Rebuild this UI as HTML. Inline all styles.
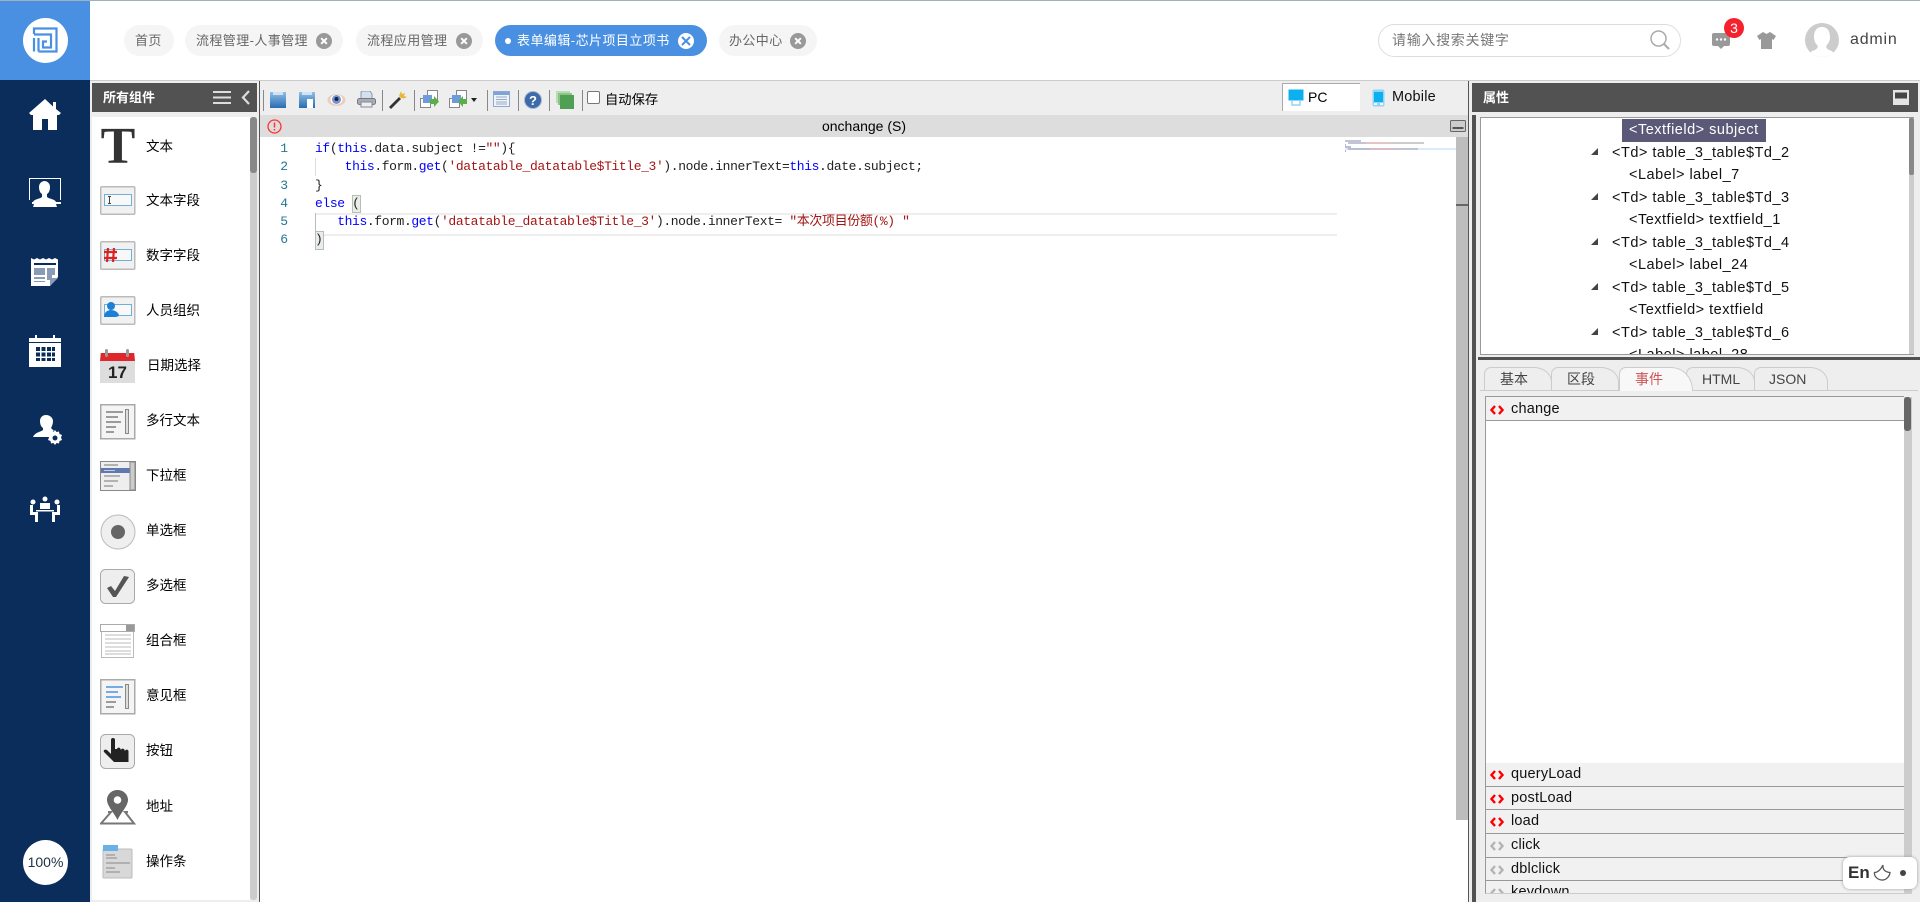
<!DOCTYPE html>
<html lang="zh"><head><meta charset="utf-8"><title>表单编辑</title>
<style>
*{box-sizing:border-box}
html,body{margin:0;padding:0;width:1920px;height:902px;overflow:hidden;background:#eee;font-family:"Liberation Sans","Noto Sans CJK SC",sans-serif;color:#000}
.a{position:absolute}
svg{position:absolute;display:block}
.tab{position:absolute;top:25px;height:31px;border-radius:16px;background:#f5f5f5;color:#666;font-size:13px;letter-spacing:.4px;line-height:31px;padding-left:11px;white-space:nowrap}
.x{position:absolute;top:7.5px;width:16px;height:16px;border-radius:50%;background:#999}
.x:before,.x:after{content:"";position:absolute;left:4px;top:7px;width:8px;height:2px;background:#fff;transform:rotate(45deg)}
.x:after{transform:rotate(-45deg)}
.lab{position:absolute;left:146px;font-size:13.5px;line-height:18px;height:18px;white-space:nowrap}
.sep{position:absolute;top:90px;width:1px;height:21px;background:#888}
.c{position:absolute;left:315px;font:13px/18px "Liberation Mono","Noto Sans CJK SC",monospace;letter-spacing:-.39px;white-space:pre;color:#222;height:18px}
.k{color:#00f}.s{color:#a31515}
.ln{position:absolute;left:260px;width:28px;text-align:right;font:13px/18px "Liberation Mono",monospace;color:#237893;height:18px}
.t{position:absolute;font-size:14.5px;letter-spacing:.5px;line-height:20px;height:20px;white-space:nowrap;color:#111}
.tri{position:absolute;left:1591px;width:0;height:0;border-left:7px solid transparent;border-bottom:7px solid #444}
.ev{position:absolute;left:1485px;width:419px;background:#f1f1f1;border-bottom:1px solid #999;border-left:1px solid #999;font-size:14.5px;letter-spacing:.2px;color:#111;padding-left:25px}
.tb{position:absolute;top:367px;height:23px;border:1px solid #ccc;border-bottom:0;border-top-right-radius:18px 15px;border-top-left-radius:7px;font-size:14px;line-height:23px;color:#444;background:#eee}
</style></head><body>

<!-- top -->
<div class="a" style="left:0;top:0;width:1920px;height:80px;background:#fff"></div>
<div class="a" style="left:0;top:0;width:1920px;height:1px;background:#9fb2b8"></div>
<div class="a" style="left:0;top:80px;width:1920px;height:1px;background:#ccc"></div>
<div class="a" style="left:0;top:1px;width:90px;height:79px;background:#4a90e2"></div>
<div class="a" style="left:23px;top:18px;width:45px;height:45px;border-radius:50%;background:#fff"></div>
<svg style="left:32px;top:27px" width="26" height="26" viewBox="0 0 26 26" fill="none" stroke="#4a90e2" stroke-width="2.200"><path d="M2 7V1.500h22.500v23H6.500"/><path d="M2 7.500h17v13h-8v-6h4"/><path d="M2 11v13.500M6.500 11v13.500"/></svg>

<div class="tab" style="left:124px;width:50px">首页</div>
<div class="tab" style="left:185px;width:158px">流程管理-人事管理<span class="x" style="left:131px"></span></div>
<div class="tab" style="left:356px;width:127px">流程应用管理<span class="x" style="left:100px"></span></div>
<div class="tab" style="left:495px;width:212px;background:#4a90e2;color:#fff;padding-left:22px;letter-spacing:.45px"><span class="a" style="left:10px;top:13px;width:6px;height:6px;border-radius:50%;background:#fff"></span>表单编辑-芯片项目立项书</div>
<div class="a" style="left:678px;top:32.5px;width:16px;height:16px;border-radius:50%;background:#fff"></div>
<svg style="left:681px;top:35.5px" width="10" height="10" viewBox="0 0 10 10" stroke="#4a90e2" stroke-width="2"><path d="M1 1l8 8M9 1L1 9"/></svg>
<div class="tab" style="left:719px;width:98px;padding-left:10px">办公中心<span class="x" style="left:71px"></span></div>

<div class="a" style="left:1378px;top:24px;width:303px;height:33px;border:1px solid #ddd;border-radius:17px;background:#fff;font-size:14px;line-height:31px;color:#777;padding-left:13px;letter-spacing:.7px">请输入搜索关键字</div>
<svg style="left:1649px;top:29px" width="22" height="22" viewBox="0 0 22 22" fill="none" stroke="#aaa" stroke-width="1.500"><circle cx="9.500" cy="9.500" r="7.500"/><path d="M15 15l5 5" stroke-width="2"/></svg>
<svg style="left:1711px;top:32px" width="20" height="18" viewBox="0 0 20 18"><path d="M3 1h14a2 2 0 0 1 2 2v9a2 2 0 0 1-2 2h-4l-3 3-3-3H3a2 2 0 0 1-2-2V3a2 2 0 0 1 2-2z" fill="#999"/><circle cx="6" cy="7.500" r="1.200" fill="#fff"/><circle cx="10" cy="7.500" r="1.200" fill="#fff"/><circle cx="14" cy="7.500" r="1.200" fill="#fff"/></svg>
<div class="a" style="left:1724px;top:18px;width:20px;height:20px;border-radius:50%;background:#f5222d;color:#fff;font-size:14px;line-height:20px;text-align:center">3</div>
<svg style="left:1757px;top:32px" width="19" height="17" viewBox="0 0 19 17"><path d="M6 0l3.500 2L13 0l6 4-2.500 4-1.500-1v10H4V7L2.500 8 0 4z" fill="#999"/></svg>
<div class="a" style="left:1805px;top:23px;width:34px;height:34px;border-radius:50%;background:#ccc;overflow:hidden"><svg style="left:0;top:0" width="34" height="34" viewBox="0 0 34 34"><path d="M17 4c-6 0-8 5-8 10 0 3 1 6 3.500 8.500 1 2-1 4-4 5-3 1-4 3-4 6.500h25c0-3.500-1-5.500-4-6.500-3-1-5-3-4-5 2.500-2.500 3.500-5.500 3.500-8.500 0-5-2-10-8-10z" fill="#fff"/></svg></div>
<div class="a" style="left:1850px;top:30px;font-size:16px;line-height:20px;color:#444;letter-spacing:.8px">admin</div>

<!-- sidebar -->
<div class="a" style="left:0;top:80px;width:90px;height:822px;background:#0b2d5b"></div>
<svg style="left:28px;top:98px" width="34" height="34" viewBox="0 0 34 34" fill="#fff"><path d="M17 1L1 15l2 2h2v15h9V21h6v11h9V17h2l2-2-5-4V4h-3v4.500z"/></svg>
<svg style="left:29px;top:178px" width="32" height="30" viewBox="0 0 32 30" fill="#fff"><path d="M0 0h32v22h-1V1H1v21H0z"/><path d="M16 3c-4 0-6 3-6 6 0 3 1 6 3 7v3c-2 2-8 2-9 5h-1v2h2l-1 3h24l-1-3h6v-2h-6c-1-3-7-3-9-5v-3c2-1 3-4 3-7 0-3-2-6-6-6z"/></svg>
<svg style="left:30px;top:257px" width="30" height="30" viewBox="0 0 30 30"><path d="M1 1l3 1.500L7 1l3 1.500L13 1l3 1.500L19 1l3 1.500L25 1l3 1.500V20l-8 9H1z" fill="#fff"/><path d="M20 29v-8h8z" fill="#8a9bb5"/><path d="M4 6h22v2H4z" fill="#0b2d5b"/><path d="M4 11h11v7H4z" fill="#8a9bb5"/><path d="M17 11h8v7h-3v5h-5z" fill="#8a9bb5"/><path d="M4 20h11v2H4zM4 24h11v1H4z" fill="#8a9bb5"/></svg>
<svg style="left:29px;top:334px" width="32" height="33" viewBox="0 0 32 33" fill="#fff"><path d="M0 4h6V1h2v3h16V1h2v3h6v29H0zM2 10v21h28V10z"/><path d="M2 10h28v21H2z"/><g fill="#0b2d5b"><path d="M7 13h4v4H7zM12.500 13h4v4h-4zM18 13h4v4h-4zM23 13h3v4h-3zM7 18.500h4v4H7zM12.500 18.500h4v4h-4zM18 18.500h4v4h-4zM23 18.500h3v4h-3zM7 24h4v3H7zM12.500 24h4v3h-4zM18 24h4v3h-4zM23 24h3v3h-3z"/><path d="M0 8h32v1H0z"/></g></svg>
<svg style="left:32px;top:415px" width="31" height="30" viewBox="0 0 31 30"><path d="M14 0c-4 0-6 3-6 6 0 3 1 6 3 7v2c-2 2-8 2-10 7h16c1-3 3-5 5-6-1-1-2-2-3-3 1-2 2-4 2-7 0-3-3-6-7-6z" fill="#fff"/><path d="M23 15l1.500 2 2.500-.5.500 2.500 2.500 1-1 2.500 1 2.500-2.500 1-.5 2.500-2.500-.5-1.500 2-1.500-2-2.500.5-.5-2.500-2.500-1 1-2.500-1-2.500 2.500-1 .5-2.500 2.500.5z" fill="#fff"/><circle cx="23" cy="23" r="2.500" fill="#0b2d5b"/></svg>
<svg style="left:28px;top:496px" width="34" height="26" viewBox="0 0 34 26" fill="#fff"><circle cx="5" cy="6" r="2.500"/><circle cx="17" cy="3" r="2.500"/><circle cx="29" cy="6" r="2.500"/><path d="M12 7h10v6H12zM2 9h3v7h5v10H7v-7H2zM32 9h-3v7h-5v10h3v-7h5z"/><path d="M8 14h18v1.500H8z"/></svg>
<div class="a" style="left:23px;top:840px;width:45px;height:45px;border-radius:50%;background:#fff;color:#234;font-size:14px;line-height:45px;text-align:center">100%</div>

<!-- left panel -->
<div class="a" style="left:92px;top:83px;width:165px;height:29px;background:#525252;color:#fff;font-size:13px;font-weight:bold;line-height:29px;padding-left:11px">所有组件</div>
<svg style="left:213px;top:90px" width="40" height="15" viewBox="0 0 40 15" fill="none" stroke="#ddd" stroke-width="2"><path d="M0 2h18M0 7.500h18M0 13h18"/><path d="M36 1l-6 6.500 6 6.500" stroke-width="2.200"/></svg>
<div class="a" style="left:92px;top:117px;width:158px;height:783px;background:#fff"></div>
<div class="a" style="left:250px;top:117px;width:7px;height:783px;background:#ccc;border-radius:3px"></div>
<div class="a" style="left:250px;top:117px;width:7px;height:56px;background:#888;border-radius:3px"></div>
<div class="a" style="left:259px;top:81px;width:1px;height:821px;background:#555"></div>

<!-- components -->
<div class="a" style="left:98px;top:120px;width:40px;height:54px;font:bold 52px/54px 'Liberation Serif',serif;color:#333;text-align:center">T</div>
<div class="lab" style="top:138px">文本</div>

<svg style="left:100px;top:186px" width="36" height="30" viewBox="0 0 36 30"><rect x=".75" y=".75" width="34" height="27.500" rx="1" fill="#f1f1f1" stroke="#bbb" stroke-width="1.500"/><rect x="4.500" y="8.500" width="27" height="11" fill="#f8f8f8" stroke="#6eb0d8"/><path d="M8 10.500h3M9.500 10.500v7M8 17.500h3" stroke="#444" fill="none"/></svg>
<div class="lab" style="top:192px">文本字段</div>

<svg style="left:100px;top:241px" width="36" height="30" viewBox="0 0 36 30"><rect x=".75" y=".75" width="34" height="27.500" rx="1" fill="#f1f1f1" stroke="#bbb" stroke-width="1.500"/><rect x="4.500" y="8.500" width="27" height="11" fill="#f8f8f8" stroke="#6eb0d8"/><path d="M8 7l-1 14M14 7l-1 14M4 11h13M4 17h13" stroke="#d22" stroke-width="2.200" fill="none"/></svg>
<div class="lab" style="top:247px">数字字段</div>

<svg style="left:100px;top:296px" width="36" height="30" viewBox="0 0 36 30"><rect x=".75" y=".75" width="34" height="27.500" rx="1" fill="#f1f1f1" stroke="#bbb" stroke-width="1.500"/><rect x="4.500" y="8.500" width="27" height="11" fill="#f8f8f8" stroke="#6eb0d8"/><circle cx="11" cy="10" r="4" fill="#1c80d8"/><path d="M4 21c0-5 4-7 7-7s8 2 8 6l-3 1z" fill="#1c80d8"/></svg>
<div class="lab" style="top:302px">人员组织</div>

<svg style="left:100px;top:349px" width="36" height="36" viewBox="0 0 36 36"><path d="M0 4h35v30H0z" fill="#ddd"/><path d="M1 4h33l1 8H0z" fill="#e0262a"/><rect x="5" y="0" width="3" height="8" rx="1.500" fill="#999"/><rect x="26" y="0" width="3" height="8" rx="1.500" fill="#999"/><text x="17.500" y="29" text-anchor="middle" font-family="Liberation Sans" font-weight="bold" font-size="17" fill="#222">17</text></svg>
<div class="lab" style="top:357px;left:147px">日期选择</div>

<svg style="left:100px;top:404px" width="36" height="36" viewBox="0 0 36 36"><rect x=".75" y=".75" width="34" height="34" fill="#f4f4f4" stroke="#aaa" stroke-width="1.500"/><path d="M6 8h17M6 13h12M6 18h15M6 23h10M6 28h8" stroke="#666" stroke-width="1.200"/><rect x="25.500" y="5.500" width="3" height="24" fill="#ddd" stroke="#888"/></svg>
<div class="lab" style="top:412px">多行文本</div>

<svg style="left:100px;top:461px" width="36" height="32" viewBox="0 0 36 32"><rect x=".5" y=".5" width="35" height="29" fill="#eee" stroke="#888"/><path d="M1 1h28v7H1z" fill="#eee"/><path d="M1 7h29v5H1z" fill="#6078b0"/><path d="M4 9.500h11" stroke="#ccd" /><path d="M4 4h14M4 15h16M4 20h14M4 25h9" stroke="#777"/><rect x="30" y="1" width="5" height="28" fill="#ccc" stroke="#888"/></svg>
<div class="lab" style="top:467px">下拉框</div>

<svg style="left:100px;top:514px" width="36" height="36" viewBox="0 0 36 36"><circle cx="18" cy="18" r="17" fill="#efefef" stroke="#bbb"/><circle cx="18" cy="18" r="7" fill="#666"/></svg>
<div class="lab" style="top:522px">单选框</div>

<svg style="left:100px;top:569px" width="36" height="36" viewBox="0 0 36 36"><rect x=".5" y=".5" width="34" height="34" rx="5" fill="#eee" stroke="#aaa"/><path d="M7 19l4-2 4 5 9-15 5 1-13 20h-3z" fill="#555"/></svg>
<div class="lab" style="top:577px">多选框</div>

<svg style="left:100px;top:624px" width="36" height="36" viewBox="0 0 36 36"><rect x="1.500" y="1.500" width="32" height="32" fill="#fff" stroke="#bbb"/><rect x=".5" y=".5" width="34" height="7" fill="#fff" stroke="#aaa"/><rect x="26" y="1" width="8" height="6" fill="#999"/><path d="M5 11h26M5 15h26M5 19h26M5 23h26M5 27h26M5 30h26" stroke="#bbb"/></svg>
<div class="lab" style="top:632px">组合框</div>

<svg style="left:100px;top:679px" width="36" height="36" viewBox="0 0 36 36"><rect x=".75" y=".75" width="34" height="34" fill="#f4f4f4" stroke="#aaa" stroke-width="1.500"/><path d="M6 8h17M6 13h12M6 18h15" stroke="#2b7fe0" stroke-width="1.200"/><path d="M6 23h10M6 28h8" stroke="#666" stroke-width="1.200"/><rect x="25.500" y="5.500" width="3" height="24" fill="#ddd" stroke="#888"/></svg>
<div class="lab" style="top:687px">意见框</div>

<svg style="left:100px;top:734px" width="36" height="36" viewBox="0 0 36 36"><rect x=".5" y=".5" width="34" height="34" rx="5" fill="#eee" stroke="#aaa"/><path d="M11 6a2 2 0 0 1 4 0v9l2 0a1.800 1.800 0 0 1 3.500 0l.5 1a1.800 1.800 0 0 1 3.500 0l.5 1a1.800 1.800 0 0 1 3.500 0V28H14L4 18c-1-2 1-3 3-2l4 4z" fill="#222"/></svg>
<div class="lab" style="top:742px">按钮</div>

<svg style="left:100px;top:790px" width="36" height="36" viewBox="0 0 36 36"><path d="M17.500 0C11 0 7 5 7 10c0 6 8 14 10.500 20C20 24 28 16 28 10 28 5 24 0 17.500 0z" fill="#666"/><circle cx="17.500" cy="10" r="3.800" fill="#fff"/><path d="M8 22h3L1 33.500h33L25 22h3" fill="none" stroke="#777" stroke-width="2"/></svg>
<div class="lab" style="top:798px">地址</div>

<svg style="left:102px;top:844px" width="32" height="36" viewBox="0 0 32 36"><rect x="1" y="5" width="29" height="29" rx="1" fill="#d8d8d8" stroke="#bbb"/><rect x="1" y="1" width="15" height="6" fill="#69b2e8"/><path d="M4 11h9M4 14h11M4 19h24M4 24h9M4 28h14" stroke="#888"/></svg>
<div class="lab" style="top:853px">操作条</div>

<!-- toolbar -->
<div class="sep" style="left:263px"></div><div class="sep" style="left:382px"></div><div class="sep" style="left:414px"></div><div class="sep" style="left:487px"></div><div class="sep" style="left:518px"></div><div class="sep" style="left:549px"></div><div class="sep" style="left:582px"></div>
<svg style="left:270px;top:92px" width="17" height="17" viewBox="0 0 17 17"><defs><linearGradient id="b1" x1="0" y1="0" x2="0" y2="1"><stop offset="0" stop-color="#8fc0e8"/><stop offset="1" stop-color="#2a6cb0"/></linearGradient></defs><rect width="16" height="16" fill="url(#b1)"/><rect x="3" y="0" width="10" height="3" fill="#cfe3f4"/></svg>
<svg style="left:299px;top:92px" width="17" height="17" viewBox="0 0 17 17"><rect width="16" height="16" fill="url(#b1)"/><rect x="3" y="0" width="10" height="3" fill="#cfe3f4"/><path d="M8 7h6v9H8z" fill="#fff"/></svg>
<svg style="left:327px;top:93px" width="19" height="14" viewBox="0 0 19 14"><ellipse cx="9.500" cy="7" rx="9" ry="6" fill="#eecdb8"/><ellipse cx="9.500" cy="6.500" rx="6" ry="5" fill="#fff"/><circle cx="9.500" cy="6.500" r="4.500" fill="#6f96d8"/><circle cx="9.500" cy="6" r="2" fill="#223"/></svg>
<svg style="left:357px;top:91px" width="19" height="17" viewBox="0 0 19 17"><path d="M5 0h8l2 3v5H4V1z" fill="#d4e0ee" stroke="#8898b0"/><rect x="0.500" y="7.500" width="18" height="6" rx="2" fill="#aab" stroke="#777"/><rect x="4" y="11" width="11" height="5" fill="#eee" stroke="#889"/></svg>
<svg style="left:388px;top:90px" width="19" height="19" viewBox="0 0 19 19"><path d="M1 17l10-10 2 2L3 19z" fill="#333"/><path d="M13 1l1 3 3-1-1 3 3 1-3 1.500L13 8l-2-2z" fill="#e8b838"/></svg>
<svg style="left:420px;top:90px" width="19" height="19" viewBox="0 0 19 19"><rect x="7.500" y=".5" width="10" height="11" fill="#fff" stroke="#888"/><rect x=".5" y="8.500" width="10" height="9" fill="#fff" stroke="#888"/><rect x="3" y="5" width="9" height="8" fill="#6d9bdc"/><path d="M10 9h4V6l5 5.500L14 17v-3h-4z" fill="#5cae4a"/></svg>
<svg style="left:449px;top:90px" width="19" height="19" viewBox="0 0 19 19"><rect x="7.500" y=".5" width="10" height="11" fill="#fff" stroke="#888"/><rect x=".5" y="8.500" width="10" height="9" fill="#fff" stroke="#888"/><rect x="3" y="5" width="9" height="8" fill="#6d9bdc"/><path d="M18 9h-4V6L9 11.500 14 17v-3h4z" fill="#5cae4a"/></svg>
<svg style="left:471px;top:98px" width="6" height="4" viewBox="0 0 6 4"><path d="M0 0h6L3 4z" fill="#222"/></svg>
<svg style="left:493px;top:91px" width="17" height="16" viewBox="0 0 17 16"><rect x=".5" y=".5" width="16" height="15" fill="#eef4fb" stroke="#8ea8d0"/><path d="M1 1h15v3H1z" fill="#7ea3d8"/><path d="M3 6h11M3 8.500h11M3 11h11M3 13h11" stroke="#9ab"/></svg>
<svg style="left:524px;top:91px" width="18" height="18" viewBox="0 0 18 18"><circle cx="9" cy="9" r="8.500" fill="#3d6aa8" stroke="#aab8cc"/><text x="9" y="14" text-anchor="middle" font-family="Liberation Sans" font-weight="bold" font-size="13" fill="#fff">?</text></svg>
<svg style="left:556px;top:91px" width="18" height="18" viewBox="0 0 18 18"><rect x="0" y="0" width="14" height="12" fill="#b8dcb4"/><rect x="2" y="2" width="14" height="12" fill="#8cc488"/><rect x="4" y="4" width="14" height="14" fill="#4f9f54"/></svg>
<div class="a" style="left:587px;top:91px;width:13px;height:13px;border:1px solid #777;border-radius:2px;background:#fff"></div>
<div class="a" style="left:605px;top:91px;font-size:13.3px;line-height:18px">自动保存</div>

<div class="a" style="left:1282px;top:83px;width:78px;height:28px;background:#fff;border:1px solid #aaa;border-right:0;border-bottom:0;font-size:14px;line-height:26px;padding-left:25px">PC</div>
<svg style="left:1288px;top:89px" width="16" height="17" viewBox="0 0 16 17"><rect x=".5" y=".5" width="15" height="11" rx="1" fill="#0ab0f0" stroke="#8fd6f5"/><path d="M4 12v4h8v-4" fill="none" stroke="#8fd6f5" stroke-width="1.500"/></svg>
<svg style="left:1372px;top:89px" width="13" height="18" viewBox="0 0 13 18"><rect x=".5" y=".5" width="12" height="17" rx="2" fill="#8fd6f5"/><rect x="2" y="3" width="9" height="10" fill="#0ab0f0"/><rect x="2" y="14" width="3" height="2" fill="#fff"/><rect x="8" y="14" width="3" height="2" fill="#fff"/></svg>
<div class="a" style="left:1425px;top:88px;font-size:14px;line-height:18px;color:#111;left:1425px;display:none"></div>
<div class="a" style="left:1392px;top:88px;font-size:14.5px;letter-spacing:.2px;line-height:18px;color:#111">Mobile</div>

<div class="a" style="left:1468px;top:81px;width:1px;height:821px;background:#555"></div>
<div class="a" style="left:1472px;top:83px;width:446px;height:29px;background:#525252;color:#fff;font-size:13px;font-weight:bold;line-height:29px;padding-left:11px">属性</div>
<svg style="left:1893px;top:90px" width="16" height="15" viewBox="0 0 16 15"><rect width="16" height="15" fill="#e4e4e4"/><rect x="2" y="2.500" width="12" height="6" fill="#444"/></svg>

<!-- editor -->
<div class="a" style="left:260px;top:115px;width:1208px;height:22px;background:#ddd"></div>
<svg style="left:267px;top:119px" width="15" height="15" viewBox="0 0 15 15" fill="none" stroke="#f33" stroke-width="1.300"><circle cx="7.500" cy="7.500" r="6.500"/><path d="M7.500 3.500v5M7.500 10v1.500" stroke-width="1.500"/></svg>
<div class="a" style="left:760px;top:117px;width:208px;text-align:center;font-size:14px;line-height:18px">onchange (S)</div>
<svg style="left:1450px;top:120px" width="16" height="12" viewBox="0 0 16 12"><rect x=".5" y=".5" width="15" height="11" rx="1" fill="#ccc" stroke="#666"/><rect x="2.500" y="7" width="11" height="2" fill="#555"/></svg>
<div class="a" style="left:260px;top:137px;width:1208px;height:765px;background:#fff"></div>
<div class="a" style="left:1456px;top:137px;width:12px;height:683px;background:#bdbdbd"></div>
<div class="a" style="left:1456px;top:204px;width:12px;height:2px;background:#666"></div>

<!-- minimap -->
<svg style="left:1345px;top:140px" width="111" height="14" viewBox="0 0 111 14"><path d="M0 1h16" stroke="#77a" stroke-width=".9"/><path d="M3 3h18" stroke="#88a" stroke-width=".9"/><path d="M21 3h24" stroke="#c88" stroke-width=".9"/><path d="M45 3h34" stroke="#999" stroke-width=".9"/><path d="M0 5h1M0 7h6" stroke="#77a" stroke-width=".9"/><path d="M0 9h111" stroke="#cfe4fb" stroke-width="1.500"/><path d="M3 9h22" stroke="#88a" stroke-width=".9"/><path d="M25 9h24" stroke="#c88" stroke-width=".9"/><path d="M49 9h24" stroke="#99a" stroke-width=".9"/><path d="M0 11h1" stroke="#777" stroke-width=".9"/></svg>

<div class="a" style="left:315px;top:213px;width:1022px;height:23px;border-top:2px solid #eee;border-bottom:2px solid #eee"></div>
<div class="a" style="left:315px;top:158px;width:1px;height:18px;background:#ddd"></div>
<div class="a" style="left:315px;top:213px;width:1px;height:18px;background:#bbb"></div>
<div class="a" style="left:352px;top:195px;width:9px;height:18px;background:#e8efe8;border:1px solid #bbb"></div>
<div class="a" style="left:315px;top:231px;width:9px;height:19px;background:#e8efe8;border:1px solid #bbb"></div>

<div class="ln" style="top:140px">1</div><div class="ln" style="top:158px">2</div><div class="ln" style="top:177px">3</div><div class="ln" style="top:195px">4</div><div class="ln" style="top:213px">5</div><div class="ln" style="top:231px">6</div>
<div class="c" style="top:140px"><span class="k">if</span>(<span class="k">this</span>.data.subject !=<span class="s">""</span>){</div>
<div class="c" style="top:158px">    <span class="k">this</span>.form.<span class="k">get</span>(<span class="s">'datatable_datatable$Title_3'</span>).node.innerText=<span class="k">this</span>.date.subject;</div>
<div class="c" style="top:177px">}</div>
<div class="c" style="top:195px"><span class="k">else</span> (</div>
<div class="c" style="top:213px">   <span class="k">this</span>.form.<span class="k">get</span>(<span class="s">'datatable_datatable$Title_3'</span>).node.innerText= <span class="s">"本次项目份额(%) "</span></div>
<div class="c" style="top:231px">)</div>

<!-- right panel -->
<div class="a" style="left:1472px;top:115px;width:4px;height:787px;background:#525252"></div>
<div class="a" style="left:1480px;top:117px;width:434px;height:238px;background:#fff;border:1px solid #999;overflow:hidden"></div>
<div class="a" style="left:1909px;top:118px;width:5px;height:236px;background:#ccc"></div>
<div class="a" style="left:1909px;top:118px;width:5px;height:57px;background:#888;border-radius:2px"></div>
<div class="a" style="left:1622px;top:119px;width:144px;height:23px;background:#5a5a78"></div>
<div class="t" style="left:1629px;top:120px;color:#fff">&lt;Textfield&gt; subject</div>
<div class="tri" style="top:148px"></div><div class="t" style="left:1612px;top:143px">&lt;Td&gt; table_3_table$Td_2</div>
<div class="t" style="left:1629px;top:165px">&lt;Label&gt; label_7</div>
<div class="tri" style="top:193px"></div><div class="t" style="left:1612px;top:188px">&lt;Td&gt; table_3_table$Td_3</div>
<div class="t" style="left:1629px;top:210px">&lt;Textfield&gt; textfield_1</div>
<div class="tri" style="top:238px"></div><div class="t" style="left:1612px;top:233px">&lt;Td&gt; table_3_table$Td_4</div>
<div class="t" style="left:1629px;top:255px">&lt;Label&gt; label_24</div>
<div class="tri" style="top:283px"></div><div class="t" style="left:1612px;top:278px">&lt;Td&gt; table_3_table$Td_5</div>
<div class="t" style="left:1629px;top:300px">&lt;Textfield&gt; textfield</div>
<div class="tri" style="top:328px"></div><div class="t" style="left:1612px;top:323px">&lt;Td&gt; table_3_table$Td_6</div>
<div class="a" style="left:1481px;top:345px;width:428px;height:9px;overflow:hidden;background:#fff"><div class="t" style="left:148px;top:0">&lt;Label&gt; label_28</div></div>
<div class="a" style="left:1478px;top:357px;width:442px;height:3px;background:#525252"></div>

<div class="a" style="left:1480px;top:390px;width:438px;height:1px;background:#ccc"></div>
<div class="tb" style="left:1484px;width:68px;padding-left:15px;background:#eee">基本</div>
<div class="tb" style="left:1551px;width:68px;padding-left:15px">区段</div>
<div class="tb" style="left:1686px;width:69px;padding-left:15px">HTML</div>
<div class="tb" style="left:1754px;width:74px;padding-left:14px">JSON</div>
<div class="tb" style="left:1619px;width:74px;height:24px;padding-left:15px;color:#c55;background:#f8f8f8;border-top-right-radius:22px 23px;z-index:2">事件</div>

<div class="a" style="left:1485px;top:420px;width:419px;height:343px;background:#fff;border-left:1px solid #999"></div>
<div class="a" style="left:1904px;top:397px;width:8px;height:497px;background:#ccc"></div>
<div class="a" style="left:1904px;top:397px;width:7px;height:34px;background:#666;border-radius:3px"></div>
<div class="ev" style="top:396px;height:25px;line-height:24px;border-top:1px solid #999"><svg style="left:4px;top:8px" width="14" height="10" viewBox="0 0 14 10" fill="none" stroke="#f00" stroke-width="2.400"><path d="M5 1L1.500 5 5 9M9 1l3.500 4L9 9"/></svg>change</div>
<div class="ev" style="top:763px;height:24px;line-height:22px"><svg style="left:4px;top:7px" width="14" height="10" viewBox="0 0 14 10" fill="none" stroke="#f00" stroke-width="2.400"><path d="M5 1L1.500 5 5 9M9 1l3.500 4L9 9"/></svg>queryLoad</div>
<div class="ev" style="top:787px;height:23px;line-height:22px"><svg style="left:4px;top:7px" width="14" height="10" viewBox="0 0 14 10" fill="none" stroke="#f00" stroke-width="2.400"><path d="M5 1L1.500 5 5 9M9 1l3.500 4L9 9"/></svg>postLoad</div>
<div class="ev" style="top:810px;height:24px;line-height:22px"><svg style="left:4px;top:7px" width="14" height="10" viewBox="0 0 14 10" fill="none" stroke="#f00" stroke-width="2.400"><path d="M5 1L1.500 5 5 9M9 1l3.500 4L9 9"/></svg>load</div>
<div class="ev" style="top:834px;height:24px;line-height:22px"><svg style="left:4px;top:7px" width="14" height="10" viewBox="0 0 14 10" fill="none" stroke="#b4b4b4" stroke-width="2.400"><path d="M5 1L1.500 5 5 9M9 1l3.500 4L9 9"/></svg>click</div>
<div class="ev" style="top:858px;height:23px;line-height:22px"><svg style="left:4px;top:7px" width="14" height="10" viewBox="0 0 14 10" fill="none" stroke="#b4b4b4" stroke-width="2.400"><path d="M5 1L1.500 5 5 9M9 1l3.500 4L9 9"/></svg>dblclick</div>
<div class="ev" style="top:881px;height:13px;line-height:22px;overflow:hidden;border-bottom:1px solid #ccc"><svg style="left:4px;top:7px" width="14" height="10" viewBox="0 0 14 10" fill="none" stroke="#b4b4b4" stroke-width="2.400"><path d="M5 1L1.500 5 5 9M9 1l3.500 4L9 9"/></svg>keydown</div>

<!-- En widget -->
<div class="a" style="left:1843px;top:857px;width:74px;height:32px;background:#fff;border-radius:7px;box-shadow:0 0 3px #999;color:#333;font-size:17px;font-weight:bold;line-height:32px;padding-left:5px">En</div>
<svg style="left:1872px;top:863px" width="40" height="20" viewBox="0 0 40 20" fill="none"><path d="M11 2c-.5 4 1.500 7 7 7.500-.5 4-4 8-8.500 7.500C5 16.500 2 13 2.500 9.500 5 9.500 8 8 11 2z" stroke="#555" stroke-width="1.300"/><circle cx="31" cy="10" r="3" fill="#444"/></svg>
</body></html>
